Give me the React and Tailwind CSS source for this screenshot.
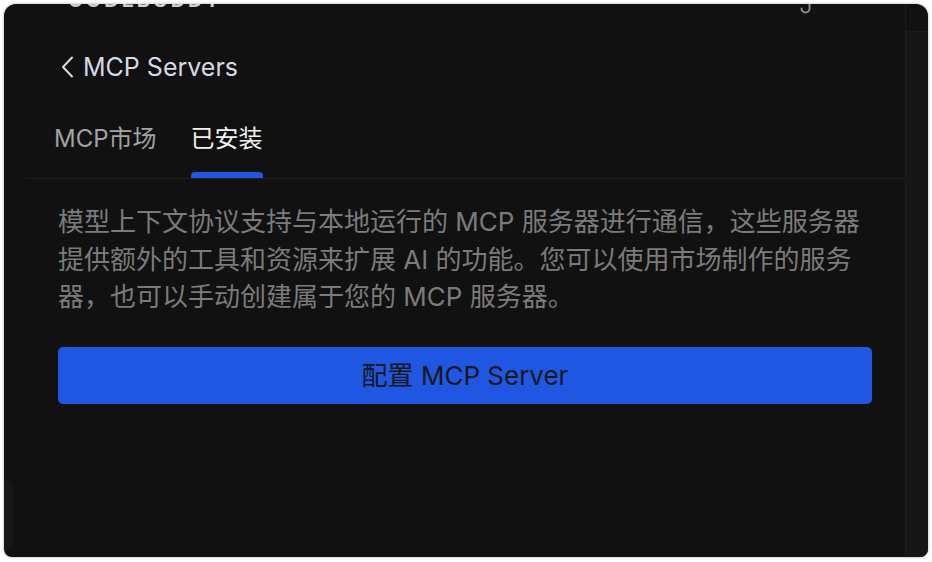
import React, { useState } from "react";

const font = { fontFamily: '"Inter", "Noto Sans CJK SC", sans-serif' };

const tabs = ["MCP市场", "已安装"];

const App = () => {
  const [active, setActive] = useState(1);

  return (
    <div className="w-[932px] h-[562px] bg-white pt-[4px] px-[4px] pb-[5px]" style={font}>
      <div className="relative h-full flex overflow-hidden rounded-t-[12px] rounded-b-[8px] bg-[#111111] shadow-[0_0_3px_rgba(0,0,0,0.35)]">
        {/* sidebar edge peeking in */}
        <div className="absolute left-0 bottom-[7px] w-[9px] h-[70px] rounded-r-[8px] bg-[#171717]" />

        <div className="flex-1 flex flex-col">
          {/* clipped title bar */}
          <div className="h-[10px] flex overflow-hidden">
            <div className="pl-[64px] h-[4px] overflow-hidden">
              <div className="-mt-[14px] text-[20px] leading-[20px] font-bold tracking-[3px] text-[#cfcfcf]">
                CODEBUDDY
              </div>
            </div>
            <svg className="ml-auto mr-[93px]" width="12" height="10" viewBox="0 0 12 10" fill="none">
              <path d="M9.5 0 V4.5 A4 4 0 0 1 1.5 4.5" stroke="#8a8a8a" strokeWidth="2" strokeLinecap="round" />
            </svg>
          </div>

          {/* header */}
          <div className="mt-[37px] flex items-center h-[32px] pl-[55px]">
            <svg width="16" height="22" viewBox="0 0 16 22" fill="none">
              <path d="M13 1.5 L4 11 L13 20.5" stroke="#d5d9e2" strokeWidth="2" strokeLinecap="round" strokeLinejoin="round" />
            </svg>
            <span className="ml-[8px] text-[25px] leading-[32px] text-[#d5d9e2]">MCP Servers</span>
          </div>

          {/* tabs */}
          <div className="mt-[40px] ml-[22px] flex gap-[28px] pl-[25px] border-b border-[#1e1e1e]">
            {tabs.map((t, i) => (
              <button key={t} onClick={() => setActive(i)} className="flex flex-col items-stretch px-[3px]">
                <span
                  className={
                    "text-[24px] leading-[32px] " + (i === active ? "text-[#f2f2f2]" : "text-[#a3a3a3]")
                  }
                >
                  {t}
                </span>
                <span
                  className={
                    "mt-[17px] h-[6px] rounded-t-[4px] " + (i === active ? "bg-[#1f57e3]" : "bg-transparent")
                  }
                />
              </button>
            ))}
          </div>

          {/* body */}
          <div className="pl-[54px] pr-[33px] pt-[24px]">
            <p className="text-[26px] leading-[37.5px] text-[#7b7b7b]">
              模型上下文协议支持与本地运行的 MCP 服务器进行通信，这些服务器提供额外的工具和资源来扩展 AI 的功能。您可以使用市场制作的服务器，也可以手动创建属于您的 MCP 服务器。
            </p>
            <button className="mt-[31px] w-full h-[57px] rounded-[5px] bg-[#1f57e3] text-[26px] text-[#171717]">
              配置 MCP Server
            </button>
          </div>
        </div>

        {/* right rail */}
        <div className="w-[23px] flex flex-col border-l border-[#1c1c1c]">
          <div className="h-[28px] border-b border-[#1c1c1c]" />
          <div className="flex-1 bg-[#161616]" />
        </div>
      </div>
    </div>
  );
};

export default App;
